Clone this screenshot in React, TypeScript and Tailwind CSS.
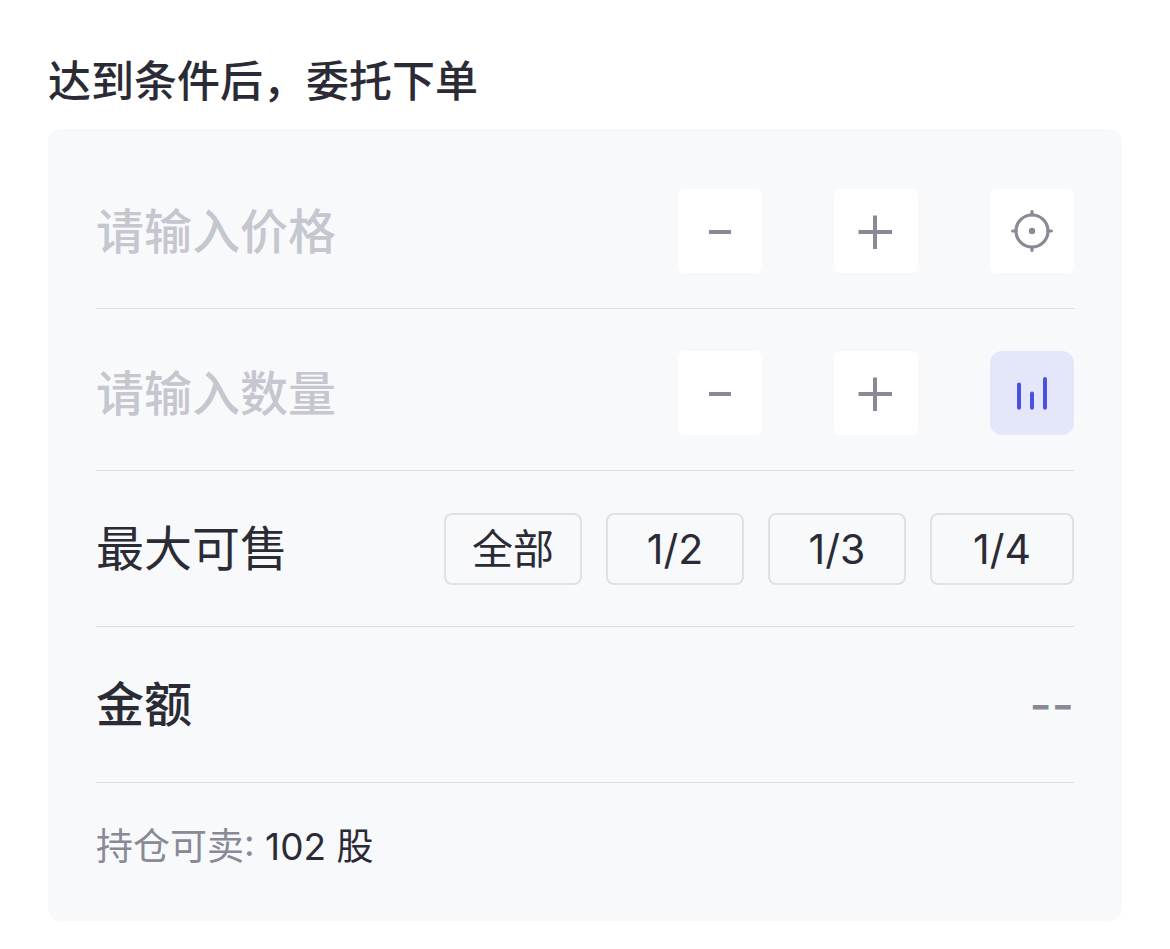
import React from 'react';

const RATIOS = ['全部', '1/2', '1/3', '1/4'];

const MinusIcon = () => (
  <svg width="42" height="42" viewBox="0 0 42 42" fill="none" stroke="currentColor" strokeWidth="4" aria-hidden="true">
    <path d="M10 22h22" />
  </svg>
);

const PlusIcon = () => (
  <svg width="42" height="42" viewBox="0 0 42 42" fill="none" stroke="currentColor" strokeWidth="4" aria-hidden="true">
    <path d="M3.500 22h33.500M20 5.500v33.500" />
  </svg>
);

const TargetIcon = () => (
  <svg width="42" height="42" viewBox="0 0 42 42" fill="none" stroke="currentColor" strokeWidth="3.200" strokeLinecap="round" aria-hidden="true">
    <circle cx="21" cy="21" r="16" />
    <circle cx="21" cy="21" r="3.200" fill="currentColor" stroke="none" />
    <path d="M21 1.600v3.400M21 37v3.400M1.600 21h3.400M37 21h3.400" />
  </svg>
);

const BarsIcon = () => (
  <svg width="42" height="42" viewBox="0 0 42 42" fill="none" stroke="currentColor" strokeWidth="4" strokeLinecap="round" aria-hidden="true">
    <path d="M8 12.500v23.200M21 21.500v14.200M34 7v28.700" />
  </svg>
);

interface StepperRowProps {
  placeholder: string;
  actionLabel: string;
  active?: boolean;
  children: React.ReactNode;
}

const StepperRow: React.FC<StepperRowProps> = ({ placeholder, actionLabel, active, children }) => (
  <div className="flex items-center gap-[72px] border-b border-[#dcdde0] pb-[35px] pt-[42px] text-[#8a8a97]">
    <input
      type="text"
      aria-label={placeholder}
      placeholder={placeholder}
      className="h-[84px] min-w-0 flex-1 bg-transparent text-[48px] font-medium text-[#2b2b35] outline-none placeholder:text-[#c5c6ce]"
    />
    <button type="button" aria-label="减少" className="flex size-[84px] items-center justify-center rounded-md bg-white">
      <MinusIcon />
    </button>
    <button type="button" aria-label="增加" className="flex size-[84px] items-center justify-center rounded-md bg-white">
      <PlusIcon />
    </button>
    <button
      type="button"
      aria-label={actionLabel}
      className={`flex size-[84px] items-center justify-center ${active ? 'rounded-xl bg-[#e4e7fa] text-[#4a50e0]' : 'rounded-md bg-white'}`}
    >
      {children}
    </button>
  </div>
);

const App: React.FC = () => {
  return (
    <main className="min-h-screen bg-white px-12 pb-7 pt-[50px] font-[Inter,'Noto_Sans_CJK_SC',sans-serif] text-[#2b2b35]">
      <h1 className="mb-4 text-[43px] font-medium leading-[63px]">达到条件后，委托下单</h1>

      <section className="rounded-xl bg-[#f8f9fb] px-12 pb-[49px] pt-[18px]">
        <StepperRow placeholder="请输入价格" actionLabel="最新价">
          <TargetIcon />
        </StepperRow>
        <StepperRow placeholder="请输入数量" actionLabel="仓位" active>
          <BarsIcon />
        </StepperRow>

        <div className="flex items-center justify-between border-b border-[#dcdde0] pb-[41px] pt-[42px]">
          <span className="text-[48px] leading-[72px]">最大可售</span>
          <div className="flex gap-6">
            {RATIOS.map((ratio) => (
              <button
                key={ratio}
                type="button"
                className="h-[72px] w-[138px] rounded-lg border-2 border-[#e0e1e4] text-[41px] leading-none last:w-36"
              >
                {ratio}
              </button>
            ))}
          </div>
        </div>

        <div className="flex items-center justify-between border-b border-[#dcdde0] pb-[41px] pt-[42px]">
          <span className="text-[48px] font-medium leading-[72px]">金额</span>
          <span className="text-[48px] font-medium leading-[72px] text-[#8a8a97]">--</span>
        </div>

        <p className="pt-[39px] text-[37px] leading-[50px]">
          <span className="text-[#8a8a97]">持仓可卖: </span>102 股
        </p>
      </section>
    </main>
  );
};

export default App;
